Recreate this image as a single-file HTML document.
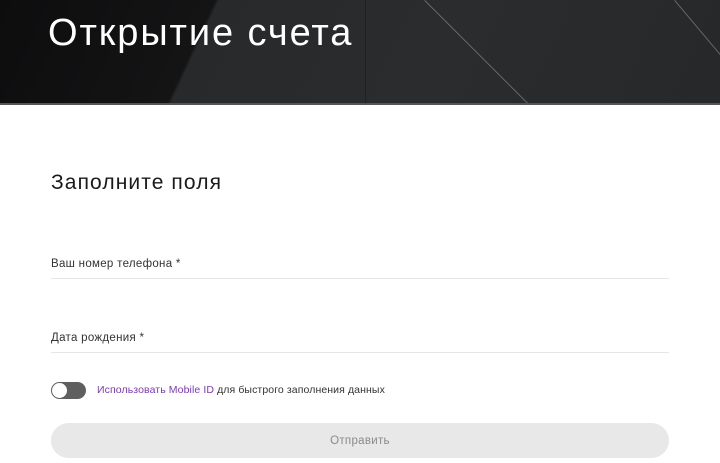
<!DOCTYPE html>
<html><head><meta charset="utf-8"><style>
*{margin:0;padding:0;box-sizing:border-box}
body{width:720px;height:463px;overflow:hidden;background:#fff;font-family:"Liberation Sans","Noto Sans CJK SC",sans-serif;position:relative}
.hero{position:absolute;left:0;top:0;width:720px;height:105px;background:linear-gradient(115deg,#0d0d0e 0%,#141415 28%,#27292b 28.5%,#2a2c2e 60%,#26282a 100%);overflow:hidden}
.hero .l{position:absolute;height:1px;background:rgba(180,180,180,.45);transform-origin:0 0}
.hero h1{position:absolute;left:48px;top:12px;color:#fff;font-weight:normal;font-size:38px;letter-spacing:1.9px}
.h2{position:absolute;left:51px;top:171px;font-size:21px;color:#1a1a1a;letter-spacing:1.1px}
.lab{position:absolute;left:51px;font-size:11.5px;color:#333;letter-spacing:0.3px}
.line{position:absolute;left:51px;width:618px;height:1px;background:#e6e6e6}
.tog{position:absolute;left:51px;top:382px;width:35px;height:17px;border-radius:9px;background:#5f5f5f}
.tog::after{content:"";position:absolute;left:1px;top:1px;width:15px;height:15px;border-radius:50%;background:#fff}
.mid{position:absolute;left:97px;top:384px;font-size:10.5px;color:#333;letter-spacing:0.1px}
.mid span{color:#7b3bb0}
.btn{position:absolute;left:51px;top:423px;width:618px;height:35px;border-radius:18px;background:#e8e8e8;color:#8a8a8a;font-size:11.5px;text-align:center;line-height:36px;letter-spacing:0.3px}
</style></head><body>
<div class="hero">
<div class="l" style="left:425px;top:0;width:150px;transform:rotate(45deg)"></div>
<div class="l" style="left:675px;top:0;width:80px;transform:rotate(50deg)"></div>
<div style="position:absolute;left:365px;top:0;width:1px;height:105px;background:rgba(0,0,0,.25)"></div>
<div style="position:absolute;left:0;bottom:0;width:720px;height:2px;background:#555"></div>
<h1>Открытие счета</h1>
</div>
<div class="h2">Заполните поля</div>
<div class="lab" style="top:258px">Ваш номер телефона *</div>
<div class="line" style="top:278px"></div>
<div class="lab" style="top:332px">Дата рождения *</div>
<div class="line" style="top:352px"></div>
<div class="tog"></div>
<div class="mid"><span>Использовать Mobile ID</span> для быстрого заполнения данных</div>
<div class="btn">Отправить</div>
</body></html>
